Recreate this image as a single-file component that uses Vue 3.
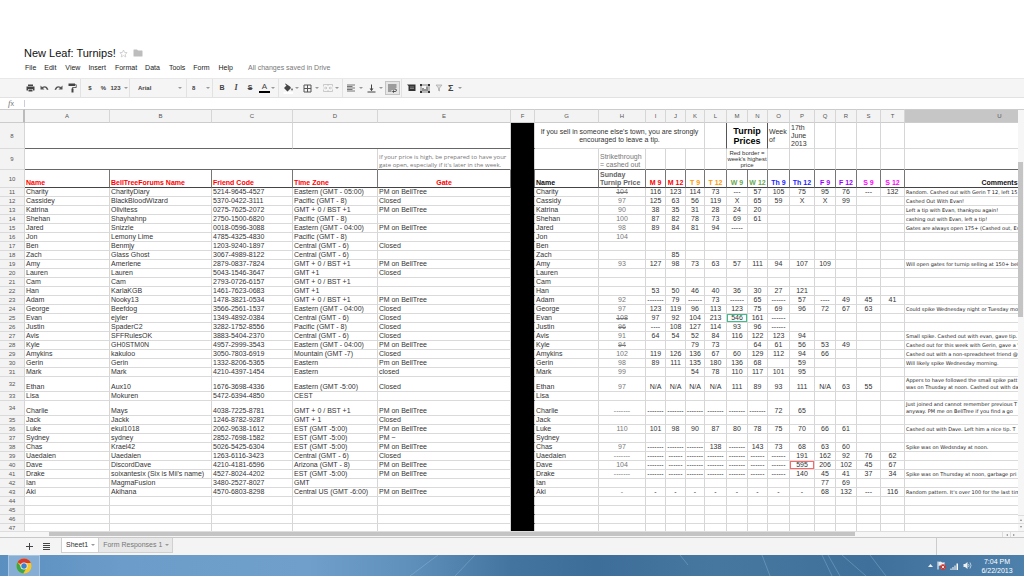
<script setup>
const menus = ['File', 'Edit', 'View', 'Insert', 'Format', 'Data', 'Tools', 'Form', 'Help']

const columns = [...'ABCDEFGHIJKLMNOPQRSTU']

const priceHeads = [
  ['M 9', 'mon'], ['M 12', 'mon'], ['T 9', 'tue'], ['T 12', 'tue'],
  ['W 9', 'wed'], ['W 12', 'wed'], ['Th 9', 'thu'], ['Th 12', 'thu'],
  ['F 9', 'fri'], ['F 12', 'fri'], ['S 9', 'sat'], ['S 12', 'sat'],
]

// name | forum name | friend code | time zone | gate | name | sunday price (~ = struck) | twelve prices | comment
const source = `
Charity|CharityDiary|5214-9645-4527|Eastern (GMT - 05:00)|PM on BellTree|Charity|~104|116,123,114,73,---,57,105,75,95,76,---,132|Random. Cashed out with Gerin T 12, left 15
Cassidey|BlackBloodWizard|5370-0422-3111|Pacific (GMT - 8)|Closed|Cassidy|97|125,63,56,119,X,65,59,X,X,99|Cashed Out With Evan!
Katrina|Olivitess|0275-7625-2072|GMT + 0 / BST +1|PM on BellTree|Katrina|90|38,35,31,28,24,20|Left a tip with Evan, thankyou again!
Shehan|Shayhahnp|2750-1500-6820|Pacific (GMT - 8)||Shehan|100|87,82,78,73,69,61|cashing out with Evan, left a tip!
Jared|Snizzle|0018-0596-3088|Eastern (GMT - 04:00)|PM on BellTree|Jared|98|89,84,81,94,-----|Gates are always open 175+ (Cashed out, Ev
Jon|Lemony Lime|4785-4325-4830|Pacific (GMT - 8)||Jon|104||
Ben|Benmjy|1203-9240-1897|Central (GMT - 6)|Closed|Ben|||
Zach|Glass Ghost|3067-4989-8122|Central (GMT - 6)||Zach||,85|
Amy|Amerlene|2879-0837-7824|GMT + 0 / BST +1|PM on BellTree|Amy|93|127,98,73,63,57,111,94,107,109|Will open gates for turnip selling at 150+ bel
Lauren|Lauren|5043-1546-3647|GMT +1|Closed|Lauren|||
Cam|Cam|2793-0726-6157|GMT + 0 / BST +1||Cam|||
Han|KarlaKGB|1461-7623-0683|GMT +1||Han||53,50,46,40,36,30,27,121|
Adam|Nooky13|1478-3821-0534|GMT + 0 / BST +1|PM on BellTree|Adam|92|-------,79,------,73,------,65,------,57,----,49,45,41|
George|Beefdog|3566-2561-1537|Eastern (GMT - 04:00)|Closed|George|97|123,119,96,113,123,75,69,96,72,67,63|Could spike Wednesday night or Tuesday mo
Evan|ejyler|1349-4892-0384|Central (GMT - 6)|Closed|Evan|~108|97,92,104,213,546,161,------|
Justin|SpaderC2|3282-1752-8556|Pacific (GMT - 8)|Closed|Justin|~96|----,108,127,114,93,96,------|
Avis|SFFRulesOK|3883-5404-2370|Central (GMT - 6)|Closed|Avis|91|64,54,52,84,116,122,123,94|Small spike. Cashed out with evan, gave tip.
Kyle|GH0STM0N|4957-2999-3543|Eastern (GMT - 04:00)|PM on BellTree|Kyle|~94|,,79,73,,64,61,56,53,49|Cashed out for this week with Gerin, gave a "
Amykins|kakuloo|3050-7803-6919|Mountain (GMT -7)|Closed|Amykins|102|119,126,136,67,60,129,112,94,66|Cashed out with a non-spreadsheet friend @
Gerin|Gerin|1332-8206-5365|Eastern|Pm on BellTree|Gerin|98|89,111,135,180,136,68,,59|Will likely spike Wednesday morning.
Mark|Mark|4210-4397-1454|Eastern|closed|Mark|99|,,54,78,110,117,101,95|
Ethan|Aux10|1676-3698-4336|Eastern (GMT -5:00)|Closed|Ethan|97|N/A,N/A,N/A,N/A,111,89,93,111,N/A,63,55|Appers to have followed the small spike patt/was on Thusday at noon. Cashed out with da
Lisa|Mokuren|5472-6394-4850|CEST||Lisa|||
Charlie|Mays|4038-7225-8781|GMT + 0 / BST +1|PM on BellTree|Charlie|-------|-------,-------,-------,-------,-------,-------,72,65|Just joined and cannot remember previous T/anyway. PM me on BellTree if you find a go
Jack|Jackk|1246-8782-9287|GMT + 1|Closed|Jack|||
Luke|ekul1018|2062-9638-1612|EST (GMT -5:00)|PM on BellTree|Luke|110|101,98,90,87,80,78,75,70,66,61|Cashed out with Dave. Left him a nice tip. T
Sydney|sydney|2852-7698-1582|EST (GMT -5:00)|PM ~|Sydney|||
Chas|Krael42|5026-5425-6304|EST (GMT -5:00)|PM on BellTree|Chas|97|-------,-------,-------,138,-------,143,73,68,63,60|Spike was on Wedsnday at noon.
Uaedaien|Uaedaien|1263-6116-3423|Central (GMT - 6)|Closed|Uaedaien|-------|-------,------,-------,-------,-------,------,------,191,162,92,76,62|
Dave|DiscordDave|4210-4181-6596|Arizona (GMT - 8)|PM on BellTree|Dave|104|-------,------,-------,-------,-------,------,------,595,206,102,45,67|
Drake|soixantesix (Six is Mii's name)|4527-8024-4202|EST (GMT -5:00)|PM on BellTree|Drake|-------|-------,------,-------,-------,-------,------,------,140,45,41,37,34|Spike was on Thursday at noon, garbage pri
Ian|MagmaFusion|3480-2527-8027|GMT||Ian||,,,,,,,,77,69|
Aki|Akihana|4570-6803-8298|Central US (GMT -6:00)|PM on BellTree|Aki|-|-,-,-,-,-,-,-,-,68,132,---,116|Random pattern. It's over 100 for the last tim
||||||||
||||||||
||||||||
||||||||`

const rows = source.trim().split('\n').map((line, i) => {
  const f = line.split('|')
  const prices = f[7].split(',')
  while (prices.length < 12) prices.push('')
  const n = i + 11
  return {
    n,
    left: f.slice(0, 5),
    name: f[5],
    struck: f[6].startsWith('~'),
    sunday: f[6].replace('~', ''),
    prices,
    comment: n === 32 || n === 34 ? f[8].split('/') : [f[8]],
    tall: n === 32 || n === 34,
  }
})
</script>

<template>
  <div class="page">
    <header class="top">
      <div class="title-row">
        <h1>New Leaf: Turnips!</h1>
        <button class="plain" aria-label="Star">
          <svg width="9" height="9" viewBox="0 0 18 18"><path d="M9 2l2.1 4.8 5.2.5-3.9 3.5 1.1 5.1L9 13.2l-4.5 2.7 1.1-5.1L1.700 7.300l5.200-.5z" fill="none" stroke="#c4c4c4" stroke-width="1.500" /></svg>
        </button>
        <button class="plain" aria-label="Move to folder">
          <svg width="10" height="8" viewBox="0 0 20 16"><path d="M1 2q0-1 1-1h6l2 2h8q1 0 1 1v10q0 1-1 1H2q-1 0-1-1z" fill="#bdbdbd" /></svg>
        </button>
      </div>
      <nav class="menu">
        <button v-for="m in menus" :key="m" class="plain">{{ m }}</button>
        <span class="status">All changes saved in Drive</span>
      </nav>
    </header>

    <div class="toolbar" role="toolbar">
      <button class="tool" aria-label="Print"><svg width="9" height="8" viewBox="0 0 18 16"><path d="M4 1h10v3H4zM1 5h16v8h-3v-3H4v3H1zM5 11h8v4H5z" fill="#444" /></svg></button>
      <button class="tool" aria-label="Undo"><svg width="9" height="8" viewBox="0 0 18 16"><path d="M1 3v8h8L6 8q5-3 8 4l3-1Q13 1 4 6z" fill="#555" /></svg></button>
      <button class="tool" aria-label="Redo"><svg width="9" height="8" viewBox="0 0 18 16"><path d="M17 3v8H9l3-3Q7 5 4 12l-3-1Q5 1 14 6z" fill="#555" /></svg></button>
      <button class="tool" aria-label="Paint format"><svg width="9" height="10" viewBox="0 0 18 20"><path d="M1 1h13v5H1z" fill="#444" /><path d="M14 3.500h2.500v5.500H9v3" fill="none" stroke="#444" stroke-width="1.600" /><path d="M7 11h4v8H7z" fill="#444" /></svg></button>
      <i class="sep"></i>
      <button class="tool">$</button>
      <button class="tool narrow">%</button>
      <button class="tool format">123<i class="caret"></i></button>
      <i class="sep"></i>
      <label class="pick family"><select aria-label="Font"><option>Arial</option></select><i class="caret"></i></label>
      <i class="sep"></i>
      <label class="pick size"><select aria-label="Font size"><option>8</option></select><i class="caret"></i></label>
      <i class="sep"></i>
      <button class="tool big">B</button>
      <button class="tool big italic">I</button>
      <button class="tool big strike">S</button>
      <button class="tool drop"><span class="ink">A</span><i class="caret"></i></button>
      <i class="sep"></i>
      <button class="tool drop" aria-label="Fill color"><svg width="11" height="11" viewBox="0 0 22 22"><path d="M5 1l9 6 2 3-7 7-7-7 5-5-3-3z" fill="#444" /><path d="M18 10q3 4 0 5-3-1 0-5z" fill="#444" /><path d="M1 18h19v4H1z" fill="#fff" /></svg><i class="caret"></i></button>
      <button class="tool drop" aria-label="Borders"><svg width="9" height="9" viewBox="0 0 9 9"><path d="M1 1h7v7H1zM4.500 1v7M1 4.500h7" fill="none" stroke="#555" /></svg><i class="caret"></i></button>
      <button class="tool drop" aria-label="Merge cells"><svg width="10" height="8" viewBox="0 0 20 16"><path d="M1 5V1h18v4M1 11v4h18v-4M10 1v3M10 12v3M1 8h6M19 8h-6M5 6l3 2-3 2M15 6l-3 2 3 2" fill="none" stroke="#bbb" stroke-width="1.500" /></svg><i class="caret"></i></button>
      <i class="sep"></i>
      <button class="tool drop" aria-label="Horizontal align"><svg width="8" height="8" viewBox="0 0 16 16"><path d="M0 2h16M0 5h11M0 8h16M0 11h11M0 14h16" stroke="#777" stroke-width="2" /></svg><i class="caret"></i></button>
      <button class="tool drop" aria-label="Vertical align"><svg width="9" height="9" viewBox="0 0 18 18"><path d="M9 1v12" stroke="#444" stroke-width="2" /><path d="M5 9h8l-4 5zM1 15h16v2H1z" fill="#444" /></svg><i class="caret"></i></button>
      <button class="tool pressed" aria-label="Wrap text"><svg width="9" height="9" viewBox="0 0 18 18"><path d="M0 2h17M0 6h17M0 10h14q3 0 3 2.500t-3 2.500h-3M0 14h7" fill="none" stroke="#444" stroke-width="1.800" /><path d="M12 12v6l-4-3z" fill="#444" /></svg></button>
      <i class="sep"></i>
      <button class="tool" aria-label="Comment"><svg width="9" height="8" viewBox="0 0 18 16"><path d="M0 1h17v13H3V4z" fill="#333" /><path d="M6 6h8M6 9h8" stroke="#999" stroke-width="1.500" /></svg></button>
      <button class="tool" aria-label="Chart"><svg width="10" height="9" viewBox="0 0 20 18"><path d="M2 2h16v14H2z" fill="none" stroke="#555" stroke-width="1.500" /><path d="M0 0h4v4H0zM16 0h4v4h-4zM0 14h4v4H0zM16 14h4v4h-4zM5 8h2v6H5zM9 10h2v4H9zM13 5h2v9h-2z" fill="#333" /></svg></button>
      <button class="tool" aria-label="Filter"><svg width="8" height="8" viewBox="0 0 16 16"><path d="M2 2h12L9 8v6l-2-1V8z" fill="#ddd" stroke="#aaa" stroke-width="1.500" /></svg></button>
      <button class="tool drop sigma">Σ<i class="caret"></i></button>
    </div>

    <div class="formula">
      <label for="fx"><em>f</em><small>x</small></label>
      <input id="fx" type="text" />
    </div>

    <main class="grid">
      <div class="viewport">
        <table>
          <colgroup>
            <col class="c-row" />
            <col v-for="c in columns" :key="c" :class="'c-' + c" />
          </colgroup>
          <thead>
            <tr>
              <th class="corner"></th>
              <th v-for="c in columns" :key="c" :class="{ selected: c === 'U' }">{{ c }}</th>
            </tr>
          </thead>
          <tbody>
            <tr class="r8">
              <th>8</th>
              <td colspan="3" class="dark-b"></td>
              <td colspan="2" class="dark-b"></td>
              <td class="black"></td>
              <td colspan="5" class="tip">If you sell in someone else's town, you are strongly encouraged to leave a tip.</td>
              <td class="dark-r"></td>
              <td colspan="2" class="turnip dark-r">Turnip Prices</td>
              <td class="left">Week of</td>
              <td class="left">17th June 2013</td>
              <td></td><td></td><td></td><td></td><td></td>
            </tr>
            <tr class="r9">
              <th>9</th>
              <td colspan="4" class="dark-b"></td>
              <td class="dark-b note gate">If your price is high, be prepared to have your<br />gate open, especially if it's later in the week.</td>
              <td class="black"></td>
              <td class="dark-b"></td>
              <td class="dark-b note">Strikethrough<br />= cashed out</td>
              <td v-for="k in 4" :key="k" class="dark-b"></td>
              <td colspan="2" class="dark-b tiny">Red border = week's highest price</td>
              <td v-for="k in 7" :key="k" class="dark-b"></td>
            </tr>
            <tr class="r10">
              <th>10</th>
              <td class="red">Name</td>
              <td class="red">BellTreeForums Name</td>
              <td class="red">Friend Code</td>
              <td class="red">Time Zone</td>
              <td class="red mid">Gate</td>
              <td class="black"></td>
              <td>Name</td>
              <td class="grey">Sunday<br />Turnip Price</td>
              <td v-for="h in priceHeads" :key="h[0]" class="mid" :class="h[1]">{{ h[0] }}</td>
              <td class="mid">Comments</td>
            </tr>
            <tr v-for="r in rows" :key="r.n" :class="{ tall: r.tall }">
              <th>{{ r.n }}</th>
              <td v-for="(v, i) in r.left" :key="i">{{ v }}</td>
              <td class="black"></td>
              <td>{{ r.name }}</td>
              <td class="mid sunday"><s v-if="r.struck">{{ r.sunday }}</s><template v-else>{{ r.sunday }}</template></td>
              <td v-for="(p, i) in r.prices" :key="i" class="mid" :class="{ best: p === '546', peak: p === '595' }">{{ p }}</td>
              <td class="comment"><div v-for="(c, i) in r.comment" :key="i">{{ c }}</div></td>
            </tr>
          </tbody>
        </table>
      </div>
      <div class="vbar">
        <div class="vthumb"></div>
        <button aria-label="Scroll up"><i class="up"></i></button>
        <button aria-label="Scroll down"><i class="down"></i></button>
      </div>
    </main>

    <div class="hbar">
      <div class="htrack"><div class="hthumb"></div></div>
      <button aria-label="Scroll left"><i class="prev"></i></button>
      <button aria-label="Scroll right"><i class="next"></i></button>
    </div>

    <footer class="tabs">
      <button class="plain add" aria-label="Add sheet"><svg width="7" height="7" viewBox="0 0 7 7"><path d="M3 0h1v3h3v1H4v3H3V4H0V3h3z" fill="#444" /></svg></button>
      <button class="plain all" aria-label="All sheets"><svg width="7" height="7" viewBox="0 0 7 7"><path d="M0 0h7v1H0zM0 2h7v1H0zM0 4h7v1H0zM0 6h7v1H0z" fill="#444" /></svg></button>
      <button class="tab active">Sheet1<i class="caret"></i></button>
      <button class="tab">Form Responses 1<i class="caret"></i></button>
      <span class="tab-end"></span>
    </footer>

    <div class="taskbar">
      <svg class="streaks" viewBox="0 0 1024 21" preserveAspectRatio="none">
        <g stroke="#9fc3e0" stroke-width="1" opacity=".35" fill="none">
          <path d="M438 0L410 21M475 0L455 21M680 0L688 10M762 0L770 21M822 0L832 21M828 0L840 21M842 0L866 21M870 0L886 21" />
        </g>
      </svg>
      <button class="chrome" aria-label="Google Chrome">
        <svg width="16" height="16" viewBox="0 0 32 32">
          <circle cx="16" cy="16" r="15" fill="#f6c927" />
          <path d="M16 16L3 8.500A15 15 0 0 1 29 8.500L29.500 10H16z" fill="#dc3a2c" />
          <path d="M3 8.500A15 15 0 0 0 14.500 31L21 20 11 19z" fill="#3fa648" />
          <circle cx="16" cy="16" r="7" fill="#f4f6f8" />
          <circle cx="16" cy="16" r="5.500" fill="#3d7fd0" />
        </svg>
      </button>
      <div class="tray">
        <svg width="5" height="4" viewBox="0 0 5 4"><path d="M0 3l2.500-3L5 3z" fill="#eee" /></svg>
        <svg width="9" height="9" viewBox="0 0 18 18"><path d="M2 1v16" stroke="#fff" stroke-width="2" /><path d="M3 2q4-2 6 0t6 0v8q-3 2-6 0t-6 0z" fill="#e8eef4" /><circle cx="12" cy="12" r="5.500" fill="#d8332b" /><path d="M9.500 9.500l5 5M14.500 9.500l-5 5" stroke="#fff" stroke-width="1.600" /></svg>
        <svg width="9" height="8" viewBox="0 0 18 16"><path d="M1 13h2v3H1zM5 10h2v6H5zM9 7h2v9H9zM13 3h3v13h-3z" fill="#fff" /></svg>
        <svg width="9" height="9" viewBox="0 0 18 18"><path d="M1 6h3l5-4v14l-5-4H1z" fill="#eee" /><path d="M11 6q2 3 0 6M14 3q4 6 0 12" fill="none" stroke="#dde8f0" stroke-width="1.500" /></svg>
        <div class="clock"><div>7:04 PM</div><div>6/22/2013</div></div>
      </div>
    </div>
  </div>
</template>

<style>
body {
  margin: 0;
  background: #fff;
}
</style>

<style scoped>
.page {
  display: flex;
  flex-direction: column;
  height: 100vh;
  overflow: hidden;
  background: #fff;
  color: #333;
  font: 7px/8px "Liberation Sans", Arial, sans-serif;
}
button, input, select {
  font: inherit;
  color: inherit;
  margin: 0;
  padding: 0;
  border: 0;
  background: none;
  border-radius: 0;
}
svg { display: block; flex: none; }
.top { flex: none; padding: 46px 0 5px 24px; }
.title-row { display: flex; align-items: center; gap: 3px; height: 14px; }
.title-row button + button { margin-left: 2px; }
h1 { margin: 0; font-size: 11px; line-height: 14px; font-weight: 400; color: #111; white-space: nowrap; }
.menu { display: flex; gap: 8px; padding: 3px 0 0 1px; height: 10px; line-height: 10px; white-space: nowrap; }
.menu button { color: #222; }
.menu button:nth-child(even) { margin-right: 1px; }
.status { margin-left: 7px; color: #777; }

.toolbar {
  flex: none;
  display: flex;
  align-items: center;
  box-sizing: border-box;
  height: 20px;
  padding-left: 23px;
  background: #f5f5f5;
  border-top: 1px solid #e8e8e8;
  border-bottom: 1px solid #e2e2e2;
  font-size: 6px;
  font-weight: 700;
  color: #444;
}
.tool { display: flex; align-items: center; justify-content: center; flex: none; width: 14px; height: 14px; }
.tool.narrow { width: 13px; }
.tool.format { width: 18px; gap: 3px; }
.tool.drop { width: 20px; justify-content: space-between; padding: 0 2px; }
.tool.big { font-size: 7px; }
.tool.sigma { font-size: 9px; width: 18px; }
.tool.italic { font-style: italic; font-size: 8px; font-family: "Liberation Serif", serif; }
.strike { text-decoration: line-through; }
.ink { font-size: 8px; line-height: 8px; font-weight: 400; width: 11px; border-bottom: 2px solid #000; }
.pressed { width: 15px; box-sizing: border-box; border: 1px solid #c4c4c4; background: #e6e6e6; }
.sep { flex: none; width: 1px; height: 18px; margin: 0 2px 0 1px; background: #e2e2e2; }
.caret { flex: none; width: 0; height: 0; border: 2px solid transparent; border-top-color: #999; border-bottom: 0; }
.pick { display: flex; align-items: center; flex: none; box-sizing: border-box; height: 14px; }
.pick select { flex: 1; min-width: 0; appearance: none; outline: 0; }
.family { width: 53px; padding: 0 3px 0 6px; }
.size { width: 22px; padding: 0 1px 0 3px; }

.formula { flex: none; display: flex; align-items: center; height: 11px; }
.formula label { box-sizing: border-box; width: 24px; padding-left: 8px; color: #777; font: 9px/10px "Liberation Serif", serif; }
.formula small { font-size: 7px; font-family: "Liberation Sans", sans-serif; }
.formula input { flex: 1; height: 7px; border-left: 1px solid #ccd; outline: 0; }

.grid { flex: 1; min-height: 0; display: flex; }
.viewport { flex: 1; min-width: 0; overflow: hidden; }
table { table-layout: fixed; width: 1095px; border-collapse: separate; border-spacing: 0; }
.c-row { width: 25px; } .c-A { width: 85px; } .c-B { width: 102px; } .c-C { width: 81px; }
.c-D { width: 85px; } .c-E { width: 133px; } .c-F { width: 24px; } .c-G { width: 64px; }
.c-H { width: 47px; } .c-I { width: 20px; } .c-J { width: 20px; } .c-K { width: 19px; }
.c-L { width: 22px; } .c-M { width: 21px; } .c-N { width: 20px; } .c-O { width: 22px; }
.c-P { width: 25px; } .c-Q { width: 21px; } .c-R { width: 21px; } .c-S { width: 24px; }
.c-T { width: 24px; } .c-U { width: 190px; }
th, td {
  box-sizing: border-box;
  height: 9px;
  padding: 0 0 0 1px;
  border-right: 1px solid #d6d6d6;
  border-bottom: 1px solid #dadada;
  overflow: hidden;
  white-space: nowrap;
  vertical-align: bottom;
  text-align: left;
  line-height: 8px;
}
th {
  padding: 0;
  background: #f3f3f3;
  font-size: 6px;
  font-weight: 400;
  color: #555;
  text-align: center;
  vertical-align: middle;
}
thead th { height: 14px; border-top: 1px solid #ccc; border-bottom-color: #ccc; }
th.selected { background: #c6c6c6; }
.corner { border-right: 2px solid #bbb; }
.mid { text-align: center; padding: 0; }
.r8 th, .r8 td { height: 26px; }
.r9 th, .r9 td { height: 21px; }
.r10 th, .r10 td { height: 18px; }
.r8 td { white-space: normal; }
td.dark-b { border-bottom-color: #666; }
td.dark-r { border-right-color: #555; }
.r10 td { border-bottom-color: #444; border-right-color: #777; font-weight: 700; color: #111; }
tr td.black { background: #000; border-bottom-color: #000; }
.r8 .tip { text-align: center; vertical-align: middle; padding: 0 2px; }
.r8 .turnip { text-align: center; vertical-align: middle; padding: 0; font-size: 9px; line-height: 10px; font-weight: 700; color: #000; }
.r8 .left { vertical-align: middle; }
.r9 .note { color: #777; }
.r9 .gate { font-family: "Open Sans", "Noto Sans", sans-serif; font-size: 6px; }
.r9 .tiny { font-size: 6px; line-height: 6px; text-align: center; vertical-align: middle; padding: 0; white-space: normal; }
.r10 .red, .r10 .mon { color: #f00; }
.r10 .grey { color: #666; }
.r10 .tue { color: #f90; }
.r10 .wed { color: #6aa84f; }
.r10 .thu { color: #22f; }
.r10 .fri { color: #90f; }
.r10 .sat { color: #f0f; }
.sunday { color: #777; }
.tall td { height: 15px; }
.comment { font-family: "DejaVu Sans", Verdana, sans-serif; font-size: 5px; line-height: 7px; color: #222; }
.best { box-shadow: inset 0 0 0 1px #3cc08a; }
.peak { box-shadow: inset 0 0 0 1px #f66; }

.vbar { flex: none; display: flex; flex-direction: column; box-sizing: border-box; width: 6px; padding-top: 52px; background: #f6f6f6; border-top: 1px solid #ccc; }
.vthumb { height: 155px; width: 5px; background: #c4c4c4; margin-bottom: auto; }
.vbar button { height: 8px; border-top: 1px solid #ddd; display: flex; align-items: center; justify-content: center; }
.hbar { flex: none; display: flex; box-sizing: border-box; height: 6px; padding-right: 6px; background: #f6f6f6; border-top: 1px solid #ddd; }
.htrack { flex: 1; padding-left: 49px; }
.hthumb { width: 84.6%; height: 4px; background: #c4c4c4; }
.hbar button { width: 8px; border-left: 1px solid #ddd; display: flex; align-items: center; justify-content: center; }
.up, .down, .prev, .next { width: 0; height: 0; border: 1px solid transparent; }
.up { border-bottom: 2px solid #888; } .down { border-top: 2px solid #888; }
.prev { border-right: 2px solid #888; } .next { border-left: 2px solid #888; }

.tabs { flex: none; display: flex; align-items: flex-start; box-sizing: border-box; height: 18px; background: #f4f4f4; border-top: 1px solid #c8c8c8; }
.plain { flex: none; white-space: nowrap; }
.add { padding: 5px 0 0 26px; }
.all { padding: 5px 0 0 10px; margin-right: 11px; }
.tab { display: flex; align-items: center; gap: 3px; box-sizing: border-box; height: 15px; padding: 0 3px 0 4px; border: 1px solid #d0d0d0; border-top: 0; background: #e8e8e8; color: #777; font-size: 7px; white-space: nowrap; }
.tab.active { background: #fff; color: #333; }
.tab + .tab { border-left: 0; }
.tab-end { align-self: stretch; margin-left: auto; width: 87px; border-left: 1px solid #ccc; }

.taskbar {
  position: relative;
  flex: none;
  display: flex;
  justify-content: space-between;
  height: 21px;
  background: linear-gradient(90deg, #5b8fc0 0, #6c9cc9 12%, #6f9fca 30%, #5f90bb 40%, #43749f 50%, #3d6d99 58%, #46789f 70%, #3f709b 85%, #4d80ab 100%);
}
.streaks { position: absolute; inset: 0; width: 100%; height: 100%; }
.chrome { position: relative; display: flex; align-items: center; justify-content: center; box-sizing: border-box; width: 32px; margin-left: 8px; border: 1px solid #a5c4e2; border-bottom: 0; background: #86aed5; }
.tray { position: relative; display: flex; align-items: center; gap: 4px; padding-right: 10px; }
.clock { width: 34px; margin-left: 4px; color: #fff; text-align: center; line-height: 9px; }
</style>
